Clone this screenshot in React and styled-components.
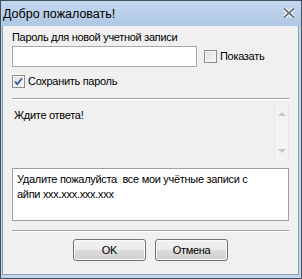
import React, { useState } from "react";
import styled, { createGlobalStyle } from "styled-components";

const GlobalStyle = createGlobalStyle`
  html, body { margin: 0; padding: 0; background: #ffffff; }
  body { font-family: "Liberation Sans", Arial, sans-serif; }
`;

function CheckBox({ checked, onClick }) {
  return (
    <Box onClick={onClick}>
      {checked && (
        <svg width="11" height="11" viewBox="0 0 11 11">
          <path
            d="M2 5.5 L4.3 8 L9 2.2"
            fill="none"
            stroke="#3a56a0"
            strokeWidth="1.8"
          />
        </svg>
      )}
    </Box>
  );
}

function CloseIcon() {
  return (
    <svg width="12" height="10" viewBox="0 0 12 10">
      <path
        d="M1.5 1 L10.5 9 M10.5 1 L1.5 9"
        stroke="#ffffff"
        strokeWidth="4"
        strokeLinecap="square"
      />
      <path
        d="M1.5 1 L10.5 9 M10.5 1 L1.5 9"
        stroke="#6e7884"
        strokeWidth="2"
        strokeLinecap="square"
      />
    </svg>
  );
}

function App() {
  const [show, setShow] = useState(false);
  const [save, setSave] = useState(true);

  return (
    <>
      <GlobalStyle />
      <Window>
        <TitleBar>
          <Title>Добро пожаловать!</Title>
          <CloseButton>
            <CloseIcon />
          </CloseButton>
        </TitleBar>
        <Body>
          <Label>Пароль для новой учетной записи</Label>
          <PasswordRow>
            <Input type="password" />
            <CheckRow $offset={4}>
              <CheckBox checked={show} onClick={() => setShow(!show)} />
              <CheckLabel>Показать</CheckLabel>
            </CheckRow>
          </PasswordRow>
          <CheckRow $offset={8}>
            <CheckBox checked={save} onClick={() => setSave(!save)} />
            <CheckLabel>Сохранить пароль</CheckLabel>
          </CheckRow>
          <Separator $top={10} />
          <LogArea>
            <LogText>Ждите ответа!</LogText>
            <ScrollBar>
              <Arrow $up />
              <Arrow />
            </ScrollBar>
          </LogArea>
          <MessageBox>
            Удалите пожалуйста  все мои учётные записи с
            <br />
            айпи xxx.xxx.xxx.xxx
          </MessageBox>
          <Separator $top={9} />
          <ButtonRow>
            <Button>OK</Button>
            <Button>Отмена</Button>
          </ButtonRow>
        </Body>
      </Window>
    </>
  );
}

export default App;

const Window = styled.div`
  width: 302px;
  height: 279px;
  box-sizing: border-box;
  border: 1px solid #434f5c;
  background: #bed5ec;
  display: flex;
  flex-direction: column;
`;

const TitleBar = styled.div`
  height: 25px;
  flex-shrink: 0;
  display: flex;
  align-items: center;
  justify-content: space-between;
  padding: 0 6px 0 2px;
  background: linear-gradient(#c4d8ef, #aec7e4);
`;

const Title = styled.div`
  font-size: 12.5px;
  color: #000000;
  padding-top: 1px;
`;

const CloseButton = styled.div`
  display: flex;
  align-items: center;
  margin-top: -2px;
`;

const Body = styled.div`
  flex: 1;
  margin: 0 2px 3px 1px;
  border: 1px solid #8c9baa;
  border-top: none;
  background: #f0f0f0;
  padding: 5px 9px 0 9px;
  font-size: 11px;
  letter-spacing: -0.3px;
  color: #000000;
  display: flex;
  flex-direction: column;
`;

const Label = styled.div`
  line-height: 13px;
`;

const PasswordRow = styled.div`
  display: flex;
  align-items: flex-start;
  margin-top: 2px;
`;

const Input = styled.input`
  width: 185px;
  height: 21px;
  box-sizing: border-box;
  border: 1px solid #a5a9ae;
  background: #ffffff;
  padding: 0 3px;
  margin: 0 7px 0 0;
  outline: none;
`;

const CheckRow = styled.label`
  display: flex;
  align-items: center;
  margin-top: ${(p) => p.$offset}px;
`;

const Box = styled.span`
  width: 13px;
  height: 13px;
  box-sizing: border-box;
  border: 1px solid #8f8f8f;
  background: linear-gradient(135deg, #dcdcdc, #fbfbfb);
  box-shadow: inset 0 0 0 1px #f4f4f4;
  display: flex;
  align-items: center;
  justify-content: center;
`;

const CheckLabel = styled.span`
  margin-left: 3px;
  line-height: 13px;
`;

const Separator = styled.div`
  height: 1px;
  margin-top: ${(p) => p.$top}px;
  background: #a0a0a0;
  box-shadow: 0 1px 0 #ffffff;
`;

const LogArea = styled.div`
  height: 55px;
  margin-top: 6px;
  display: flex;
  justify-content: space-between;
`;

const LogText = styled.div`
  padding: 4px 0 0 2px;
  line-height: 13px;
`;

const ScrollBar = styled.div`
  width: 15px;
  box-sizing: border-box;
  border-left: 1px solid #e6e6e6;
  border-right: 1px solid #e6e6e6;
  background: #f3f3f3;
  display: flex;
  flex-direction: column;
  justify-content: space-between;
  align-items: center;
  padding: 7px 0 7px;
`;

const Arrow = styled.span`
  width: 0;
  height: 0;
  border-left: 4px solid transparent;
  border-right: 4px solid transparent;
  ${(p) =>
    p.$up
      ? "border-bottom: 4px solid #c6c6c6;"
      : "border-top: 4px solid #c6c6c6;"}
`;

const MessageBox = styled.div`
  height: 53px;
  box-sizing: border-box;
  margin-top: 8px;
  border: 1px solid #a0a0a0;
  background: #ffffff;
  padding: 3px 4px;
  line-height: 15px;
  white-space: pre-wrap;
`;

const ButtonRow = styled.div`
  display: flex;
  justify-content: center;
  gap: 9px;
  margin-top: 8px;
`;

const Button = styled.button`
  width: 73px;
  height: 22px;
  box-sizing: border-box;
  border: 1px solid #707070;
  border-radius: 3px;
  background: linear-gradient(#f2f2f2 0%, #ebebeb 50%, #dddddd 51%, #cfcfcf 100%);
  box-shadow: inset 0 0 0 1px #fcfcfc;
  font-family: "Liberation Sans", Arial, sans-serif;
  font-size: 11px;
  font-weight: 400;
  letter-spacing: -0.3px;
  color: #000000;
  padding: 0;
`;
